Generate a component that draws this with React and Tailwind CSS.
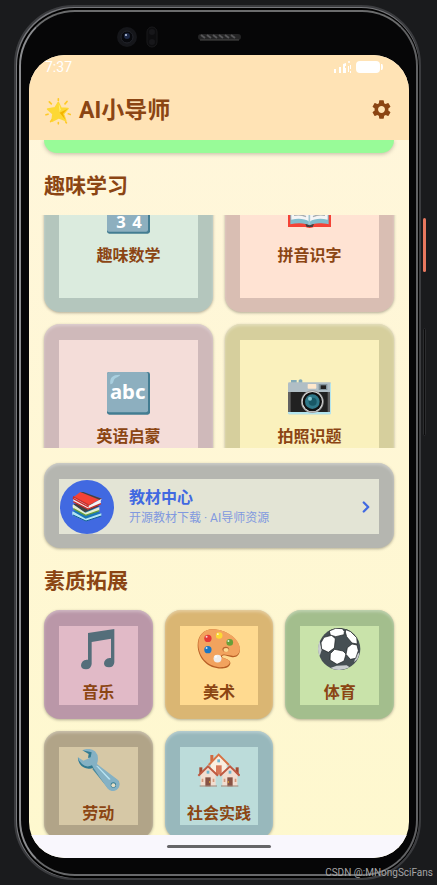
import { ChevronRight } from 'lucide-react';
import { MdSettings } from 'react-icons/md';

const StarIcon = () => (
  <svg viewBox="0 0 78 80" className="w-[26px] h-[27px]" aria-hidden="true">
    <path d="M40 13l8 17 21 1-14 16 7 20-21-8-20 10 3-22L8 33l22-4z" fill="#fdd835" stroke="#fdd835" strokeWidth="5" strokeLinejoin="round" />
    <path d="M44 44l24-12-14 15 7 18z" fill="#f4b400" />
    <path d="M41 16l6 17-3 9z" fill="#fff176" />
    <g stroke="#ffca28" strokeWidth="5" strokeLinecap="round">
      <path d="M40 2v5M13 11l6 6M66 10l-6 7M3 50l6-2M70 47l6 2M17 70l4-5M40 73v4M62 71l2 3" />
    </g>
  </svg>
);

const NumbersIcon = () => (
  <svg viewBox="0 0 129 129" className="w-[43px] h-[43px]" aria-hidden="true">
    <rect width="129" height="128" rx="7" fill="#437c91" />
    <rect width="123" height="122" rx="6" fill="#8dafbf" />
    <g fill="#fff" fontFamily="Noto Sans, sans-serif" fontWeight="700" fontSize="50" textAnchor="middle">
      <text x="42" y="111">3</text>
      <text x="90" y="111">4</text>
    </g>
  </svg>
);

const AbcIcon = () => (
  <svg viewBox="0 0 129 129" className="w-[43px] h-[43px]" aria-hidden="true">
    <rect width="129" height="128" rx="7" fill="#437c91" />
    <rect width="123" height="121" rx="6" fill="#8dafbf" />
    <path d="M10 37C8 18 14 8 40 8c-4 8-18 8-20 18-2 8-5 10-10 11z" fill="#a9cfdf" />
    <text x="62" y="81" fill="#fff" fontFamily="Noto Sans, sans-serif" fontWeight="700" fontSize="61" textAnchor="middle">abc</text>
  </svg>
);

const BookIcon = () => (
  <svg viewBox="0 0 129 129" className="w-[43px] h-[43px]" aria-hidden="true">
    <path d="M0 24h129v84H78c-4 0-5 3-13 3s-9-3-13-3H0z" fill="#f44336" />
    <path d="M7 18l57 8 58-8v82c-28-6-48-3-57 5-9-8-32-11-58-5z" fill="#82bccc" />
    <path d="M10 15c25-3 43-1 54 9v68c-14-9-32-11-54-6zM119 15c-25-3-43-1-54 9v68c14-9 32-11 54-6z" fill="#f5f5f5" />
    <path d="M64 24v76" stroke="#a5c7d0" strokeWidth="5" />
    <path d="M18 31q20-4 36 4M18 45q20-4 36 4M18 59q20-4 36 4M18 73q20-4 36 4M111 31q-20-4-36 4M111 45q-20-4-36 4M111 59q-20-4-36 4M111 73q-20-4-36 4" stroke="#a8aeb0" strokeWidth="4" fill="none" />
    <path d="M52 99c8 0 8 4 13 4s6-4 13-4l-4 9H56z" fill="#424242" />
  </svg>
);

const CameraIcon = () => (
  <svg viewBox="0 0 129 129" className="w-[43px] h-[43px]" aria-hidden="true">
    <path d="M9 24h17v10H9zM32 25q6-6 11 0v9H32z" fill="#82aab8" />
    <rect y="31" width="129" height="96" rx="4" fill="#b0bec5" />
    <path d="M0 60h129v60H0z" fill="#212121" />
    <path d="M0 60h8v60H0zM119 60h8v60h-8z" fill="#616161" />
    <path d="M0 120h129v5q-2 2-4 2H4q-4 0-4-3zM126 34h3v86h-3z" fill="#b3e5ee" />
    <rect x="59" y="36" width="26" height="14" rx="2" fill="#ffe8cc" />
    <rect x="92" y="36" width="26" height="18" fill="#82939b" />
    <rect x="98" y="40" width="16" height="11" fill="#212121" />
    <circle cx="73" cy="89" r="34" fill="#9e9e9e" />
    <circle cx="73" cy="89" r="31" fill="#eee" />
    <circle cx="73" cy="89" r="29" fill="#111" />
    <circle cx="73" cy="89" r="22" fill="#2f7889" />
    <circle cx="74" cy="89" r="12" fill="#185866" />
    <circle cx="66" cy="80" r="6" fill="#82c4d0" />
  </svg>
);

const BooksIcon = () => (
  <svg viewBox="0 0 90 90" className="w-[30px] h-[30px]" aria-hidden="true">
    <path d="M2 58l36 26 50-19-38-22z" fill="#1976b8" />
    <path d="M2 58q-3 6 0 12l40 18 46-16v-8L41 80z" fill="#b3e5f5" />
    <path d="M3 69l39 18 46-15" stroke="#0d5c91" strokeWidth="3" fill="none" />
    <path d="M3 37l35 24 44-18-30-18z" fill="#424242" />
    <path d="M3 37q-3 7 1 13l37 20 41-14V45L40 62z" fill="#e4efd0" />
    <path d="M4 50l37 20 41-14" stroke="#689f38" strokeWidth="4" fill="none" />
    <path d="M5 15L25 0l64 20-39 20z" fill="#f44336" />
    <path d="M25 0h9l55 20-5 4z" fill="#424242" />
    <path d="M5 15q-4 8 0 14l43 23 39-17q-4-7 2-15L50 41z" fill="#f5f5f5" />
    <path d="M5 15l43 23v6L4 20zM4 29l44 22 39-16" fill="none" stroke="#c92d2b" strokeWidth="4" />
  </svg>
);

const MusicIcon = () => (
  <svg viewBox="0 0 129 129" className="w-[43px] h-[43px]" aria-hidden="true">
    <path d="M33 15l79-12v100q-1 15-16 15-15 0-15-12 1-14 17-16h4V32L44 42v66q-2 16-17 16-15 0-15-12 1-15 17-17h4z" fill="#546e7a" />
  </svg>
);

const PaletteIcon = () => (
  <svg viewBox="0 0 130 129" className="w-[43px] h-[43px]" aria-hidden="true">
    <path d="M2 52C2 22 20 3 47 3c36 0 80 26 83 60 0 22-14 27-27 24-10-2-22-8-27-3-6 8 27 7 25 22-2 13-18 17-35 16C28 119 2 87 2 52z" fill="#b85f26" />
    <path d="M4 49C4 21 21 3 48 3c36 0 79 25 82 57 0 21-14 26-27 23-11-2-25-7-30 0-6 9 28 8 26 21-2 11-17 15-32 14C30 115 4 84 4 49z" fill="#f2a35e" />
    <ellipse cx="87" cy="64" rx="10" ry="8" fill="#b96430" />
    <ellipse cx="88" cy="66" rx="8" ry="6" fill="#ffda90" />
    <circle cx="33" cy="31" r="11" fill="#e53935" />
    <circle cx="67" cy="22" r="10" fill="#fdd835" />
    <circle cx="99" cy="43" r="10" fill="#689f38" />
    <circle cx="33" cy="65" r="11" fill="#1976c5" />
    <circle cx="62" cy="92" r="12" fill="#eee" />
    <g fill="#fff" opacity=".8">
      <circle cx="29" cy="26" r="3" />
      <circle cx="63" cy="18" r="3" />
      <circle cx="95" cy="39" r="3" />
      <circle cx="29" cy="60" r="3" />
      <circle cx="57" cy="86" r="4" />
    </g>
  </svg>
);

const BallIcon = () => (
  <svg viewBox="0 0 129 129" className="w-[43px] h-[43px]" aria-hidden="true">
    <circle cx="64" cy="63" r="63" fill="#464f53" />
    <path d="M0 63q0-12 5-25l6 28-6 18Q0 74 0 63zM37 120l19-7 30-1 9 6q-30 15-58 2zM108 103l7-22 9-8q0 20-16 30z" fill="#c9cdcf" />
    <g fill="#fff" stroke="#171b1c" strokeWidth="2" strokeLinejoin="round">
      <path d="M18 28l23-6 11 10-3 28-18 13-20-10-2-19z" />
      <path d="M50 64l25 5 9 9-6 21-21 10-21-13 1-19z" />
      <path d="M102 48l15 3 4 17-8 23-16 3-13-15 4-20z" />
      <path d="M34 9l19-8 20 1 6 8-1 10-25 6-16-5z" />
      <path d="M84 5l14 6 18 18 2 19-16-3-16-19-4-14z" />
    </g>
  </svg>
);

const WrenchIcon = () => (
  <svg viewBox="0 0 129 129" className="w-[43px] h-[43px]" aria-hidden="true">
    <path d="M54 48L46 60l47 58q14 10 26 2 12-10 5-25z" fill="#48899d" />
    <path d="M16 4q20-10 38 3 14 14 6 38l62 47q9 10 4 22-7 14-22 12-8-2-13-8L49 56Q26 62 12 48 2 39 3 25l16 10 17-7 2-16z" fill="#84b1c4" />
    <path d="M3 25q-1 6 2 12 5 16 22 21 12 3 22-2l-4-7q-17 8-30-4L5 33zM16 4l19 11-2 12 8-2 3-15z" fill="#327a90" />
    <path d="M57 50l6 2 38 39-5 1z" fill="#b9e4f3" />
    <circle cx="109" cy="108" r="8" fill="#327a90" />
    <circle cx="109" cy="109" r="6" fill="#e8dfc5" />
  </svg>
);

const House = ({ x, y }) => (
  <g transform={`translate(${x} ${y})`}>
    <path d="M5 6h9v20H5z" fill="#a64c32" />
    <path d="M9 27L31 5l23 22v36H9z" fill="#f2ddd0" />
    <path d="M2 31L31 3l30 28" fill="none" stroke="#bf5941" strokeWidth="6" />
    <path d="M23 36h16v27H23z" fill="#885345" />
    <path d="M27 16h8v9h-8z" fill="#70b6ce" />
    <path d="M12 40h5v10h-5zM45 40h5v10h-5z" fill="#d49a7c" />
    <circle cx="36" cy="50" r="2" fill="#fbc02d" />
    <path d="M6 62h52" stroke="#9c8578" strokeWidth="3" />
  </g>
);

const HousesIcon = () => (
  <svg viewBox="0 0 129 129" className="w-[43px] h-[43px]" aria-hidden="true">
    <g transform="translate(34 14)">
      <path d="M6 4h9v20H6z" fill="#d2683f" />
      <path d="M8 29L31 4l24 25v34H8z" fill="#faeee0" />
      <path d="M1 34L31 3l31 31" fill="none" stroke="#d77143" strokeWidth="6" />
      <path d="M23 35h17v28H23z" fill="#d67758" />
      <path d="M27 17h8v9h-8z" fill="#70b6ce" />
    </g>
    <House x={2} y={49} />
    <g transform="translate(130 0) scale(-1 1)">
      <House x={0} y={49} />
    </g>
  </svg>
);

const learning = [
  { label: '趣味数学', icon: NumbersIcon, ring: 'bg-[#b4c6bd]', fill: 'bg-[#dbebde]' },
  { label: '拼音识字', icon: BookIcon, ring: 'bg-[#d9beb3]', fill: 'bg-[#ffe3d3]' },
  { label: '英语启蒙', icon: AbcIcon, ring: 'bg-[#cfb9ba]', fill: 'bg-[#f4ddd9]' },
  { label: '拍照识题', icon: CameraIcon, ring: 'bg-[#d6cf9d]', fill: 'bg-[#faf1bd]' },
];

const activities = [
  { label: '音乐', icon: MusicIcon, ring: 'bg-[#ba97a8]', fill: 'bg-[#e1bac7]' },
  { label: '美术', icon: PaletteIcon, ring: 'bg-[#dab673]', fill: 'bg-[#ffda90]' },
  { label: '体育', icon: BallIcon, ring: 'bg-[#a3be8d]', fill: 'bg-[#c9e3aa]' },
  { label: '劳动', icon: WrenchIcon, ring: 'bg-[#b1a488]', fill: 'bg-[#d6c8a6]' },
  { label: '社会实践', icon: HousesIcon, ring: 'bg-[#98b8bc]', fill: 'bg-[#bcdcda]' },
];

const SubjectCard = ({ label, icon: Icon, ring, fill }) => (
  <button className={`aspect-square w-full min-w-0 rounded-2xl px-[15px] pt-4 pb-3.5 shadow-[0_1px_3px_rgba(0,0,0,0.3),inset_0_2px_3px_rgba(255,255,255,0.3)] ${ring}`}>
    <span className={`flex h-full flex-col items-center justify-center gap-3 ${fill}`}>
      <Icon />
      <span className="text-base leading-5 font-bold whitespace-nowrap">{label}</span>
    </span>
  </button>
);

const SectionTitle = ({ children }) => (
  <h2 className="pt-[17px] pb-[13px] text-[21px] leading-8 font-bold">{children}</h2>
);

const StatusBar = () => (
  <div className="flex h-6 items-center justify-between pr-[26px] pl-4 text-white">
    <span className="text-sm leading-6">7:37</span>
    <svg viewBox="0 0 49 14" className="h-3.5 w-[49px]" fill="currentColor" aria-hidden="true">
      <path d="M0 9h2v4H0zM5 7h2v6H5zM9 4l3-1v3h-1v2h1v5H9zM14 6h1v6h-1zM16 5h1v4h-1zM16 11h1v2h-1z" />
      <circle cx="15" cy="2" r="1" />
      <rect x="22" y="1" width="24" height="12" rx="4" />
      <path d="M47 4h1q1 0 1 3t-1 3h-1z" />
    </svg>
  </div>
);

const EarpieceRow = () => (
  <svg viewBox="0 0 380 43" className="h-[43px] w-full" aria-hidden="true">
    <circle cx="98" cy="25" r="10" fill="#15161a" />
    <circle cx="98" cy="25" r="6" fill="#08090d" stroke="#22242b" />
    <circle cx="98" cy="24" r="3" fill="#1d2947" />
    <circle cx="97" cy="23" r="1" fill="#c3d1e8" />
    <rect x="118" y="15" width="10" height="20" rx="5" fill="#0d0d0f" stroke="#19191b" />
    <circle cx="123" cy="20" r="3" fill="#17171a" />
    <circle cx="123" cy="30" r="3" fill="#17171a" />
    <rect x="169" y="22" width="43" height="6" rx="3" fill="#242425" />
    <path d="M172 23l4 3M178 23l4 3M184 23l4 3M190 23l4 3M196 23l4 3M202 23l4 3" stroke="#565658" strokeWidth="2" />
    <path d="M171 28h39" stroke="#4a4a4b" />
  </svg>
);

export default function App() {
  return (
    <div className="relative min-h-screen bg-[#1a1b1d] pt-[5px] pr-4 pb-[2px] pl-3.5 font-[Roboto,'Noto_Sans_CJK_SC',sans-serif] text-[#8b4513]">
      {/* side keys */}
      <div className="absolute top-[218px] right-[11px] h-[54px] w-[3px] rounded-sm bg-[#e8785f]" />
      <div className="absolute top-[328px] right-[11px] h-[108px] w-[3px] rounded-sm border border-[#2c2d2f] bg-[#0c0c0d]" />

      <div className="rounded-[60px] border-2 border-[#3b3c3f] bg-[#77787c] pt-px pl-px">
        <div className="rounded-[58px] bg-black pt-[2px] pr-px pb-[2px] pl-[2px]">
          <div className="rounded-[56px] border-2 border-t-[#6b6c6d] border-r-[#606163] border-b-[#68696b] border-l-[#8b8c8f] bg-[#060607] pr-[7px] pb-4 pl-2">
            <EarpieceRow />

            <div className="overflow-hidden rounded-[36px] bg-linear-to-b from-[#fff6dc] to-[#fef8ce]">
              <header className="bg-[#ffe3b5]">
                <StatusBar />
                <div className="flex h-[61px] items-center justify-between px-4">
                  <h1 className="flex items-center gap-2 pt-[3px] text-[23px] leading-8 font-bold">
                    <StarIcon />
                    AI小导师
                  </h1>
                  <button aria-label="设置">
                    <MdSettings size={23} />
                  </button>
                </div>
              </header>

              <main className="h-[695px] overflow-hidden px-[15px]">
                <div className="h-[13px] rounded-b-[20px] bg-[#98fb98] shadow-[0_1px_4px_rgba(0,0,0,0.25)]" />

                <SectionTitle>趣味学习</SectionTitle>
                <div className="-mx-1 h-[233px] overflow-hidden px-1">
                  <div className="-mt-[72px] grid grid-cols-2 gap-3">
                    {learning.map((item) => (
                      <SubjectCard key={item.label} {...item} />
                    ))}
                  </div>
                </div>

                <button className="mt-[15px] block w-full rounded-2xl bg-[#b5b6b0] px-[15px] pt-4 pb-3.5 text-left text-[#4169e1] shadow-[0_1px_3px_rgba(0,0,0,0.3),inset_0_2px_3px_rgba(255,255,255,0.3)]">
                  <span className="flex h-[55px] items-center bg-[#e3e4d5] pr-1 pl-px">
                    <span className="flex size-[54px] shrink-0 items-center justify-center rounded-full bg-[#4169e1]">
                      <BooksIcon />
                    </span>
                    <span className="ml-[15px] flex-1 pt-[3px]">
                      <span className="block text-base leading-5 font-bold">教材中心</span>
                      <span className="block text-xs leading-5 text-[#8199df]">开源教材下载 · AI导师资源</span>
                    </span>
                    <ChevronRight size={18} strokeWidth={3} />
                  </span>
                </button>

                <SectionTitle>素质拓展</SectionTitle>
                <div className="grid grid-cols-3 gap-3">
                  {activities.map((item) => (
                    <SubjectCard key={item.label} {...item} />
                  ))}
                </div>
              </main>

              <div className="flex h-[23px] items-center justify-center bg-[#f9f7fd]">
                <div className="h-[3px] w-[104px] rounded-full bg-[#666568]" />
              </div>
            </div>
          </div>
        </div>
      </div>

      <p className="absolute right-1 bottom-1 text-[10px] leading-4 text-[#a5a5a6]">CSDN @:MNongSciFans</p>
    </div>
  );
}
